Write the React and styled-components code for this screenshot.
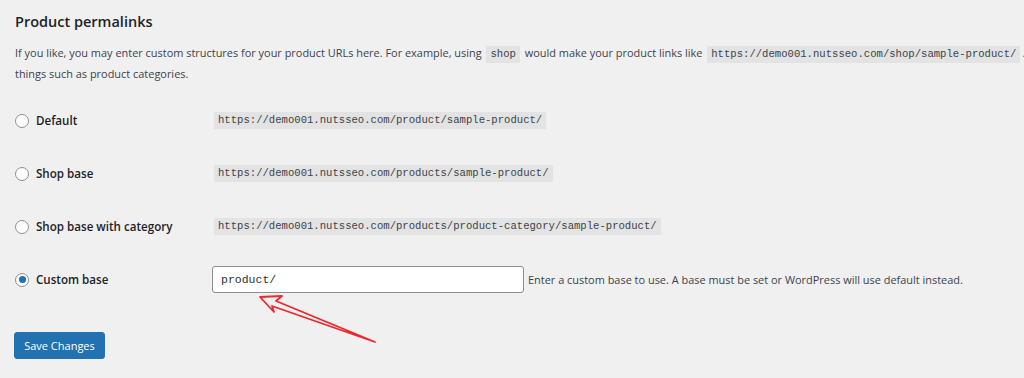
import React from "react";
import styled, { createGlobalStyle } from "styled-components";

const GlobalStyle = createGlobalStyle`
  html, body {
    margin: 0;
    padding: 0;
    background: #f0f0f1;
    overflow: hidden;
  }
  body {
    font-family: "Open Sans", "Noto Sans", sans-serif;
    color: #3c434a;
  }
`;

const Page = styled.div`
  position: relative;
  width: 1024px;
  height: 378px;
  padding: 13px 0 0 15px;
  box-sizing: border-box;
`;

const Title = styled.h2`
  margin: 0;
  font-size: 14.5px;
  font-weight: 600;
  color: #1d2327;
  line-height: 18px;
`;

const Intro = styled.p`
  margin: 12px 0 0;
  font-size: 10.95px;
  line-height: 19px;
  white-space: nowrap;
`;

const Code = styled.code`
  font-family: "Liberation Mono", "DejaVu Sans Mono", monospace;
  font-size: 10.6px;
  background: #e3e3e3;
  color: #3c434a;
  padding: 2px 4px 3px;
  margin: 0 2px;
`;

const Form = styled.div`
  display: flex;
  flex-direction: column;
  margin-top: 11px;
`;

const Row = styled.div`
  display: flex;
  align-items: center;
  height: 53px;
`;

const Label = styled.label`
  display: flex;
  align-items: center;
  width: 197px;
  gap: 7px;
  font-size: 11.6px;
  font-weight: 600;
  color: #1d2327;
`;

const Radio = styled.span`
  width: 14px;
  height: 14px;
  box-sizing: border-box;
  border-radius: 50%;
  border: 1px solid #8c8f94;
  background: #fff;
  display: flex;
  align-items: center;
  justify-content: center;
  &::after {
    content: "";
    width: 7px;
    height: 7px;
    border-radius: 50%;
    background: ${(p) => (p.checked ? "#2271b1" : "transparent")};
  }
`;

const Field = styled.div`
  display: flex;
  align-items: center;
  gap: 4px;
  font-size: 10.95px;
`;

const Input = styled.input`
  width: 312px;
  height: 27px;
  box-sizing: border-box;
  border: 1px solid #8c8f94;
  border-radius: 3px;
  background: #fff;
  padding: 0 8px;
  font-family: "Liberation Mono", "DejaVu Sans Mono", monospace;
  font-size: 11.5px;
  color: #2c3338;
  outline: none;
`;

const Button = styled.button`
  margin-top: 26px;
  margin-left: -1px;
  width: 91px;
  height: 27px;
  border: 1px solid #2271b1;
  border-radius: 3px;
  background: #2271b1;
  color: #fff;
  font-family: "Open Sans", "Noto Sans", sans-serif;
  font-size: 11px;
  padding: 0;
`;

const Arrow = styled.svg`
  position: absolute;
  left: 0;
  top: 0;
  pointer-events: none;
`;

const options = [
  { label: "Default", url: "https://demo001.nutsseo.com/product/sample-product/" },
  { label: "Shop base", url: "https://demo001.nutsseo.com/products/sample-product/" },
  {
    label: "Shop base with category",
    url: "https://demo001.nutsseo.com/products/product-category/sample-product/",
  },
];

export default function App() {
  return (
    <>
      <GlobalStyle />
      <Page>
        <Title>Product permalinks</Title>
        <Intro>
          If you like, you may enter custom structures for your product URLs here. For example, using{" "}
          <Code>shop</Code> would make your product links like{" "}
          <Code>https://demo001.nutsseo.com/shop/sample-product/</Code>. This setting affects product URLs only, not
          <br />
          things such as product categories.
        </Intro>
        <Form>
          {options.map((o) => (
            <Row key={o.label}>
              <Label>
                <Radio />
                {o.label}
              </Label>
              <Field>
                <Code>{o.url}</Code>
              </Field>
            </Row>
          ))}
          <Row>
            <Label>
              <Radio checked />
              Custom base
            </Label>
            <Field>
              <Input defaultValue="product/" />
              Enter a custom base to use. A base must be set or WordPress will use default instead.
            </Field>
          </Row>
        </Form>
        <Button>Save Changes</Button>
        <Arrow width="1024" height="378" viewBox="0 0 1024 378">
          <polygon
            points="260,297 282,296 276,301 375,342 272,306 274,312"
            fill="none"
            stroke="#f2262b"
            strokeWidth="1.8"
            strokeLinejoin="round"
          />
        </Arrow>
      </Page>
    </>
  );
}
